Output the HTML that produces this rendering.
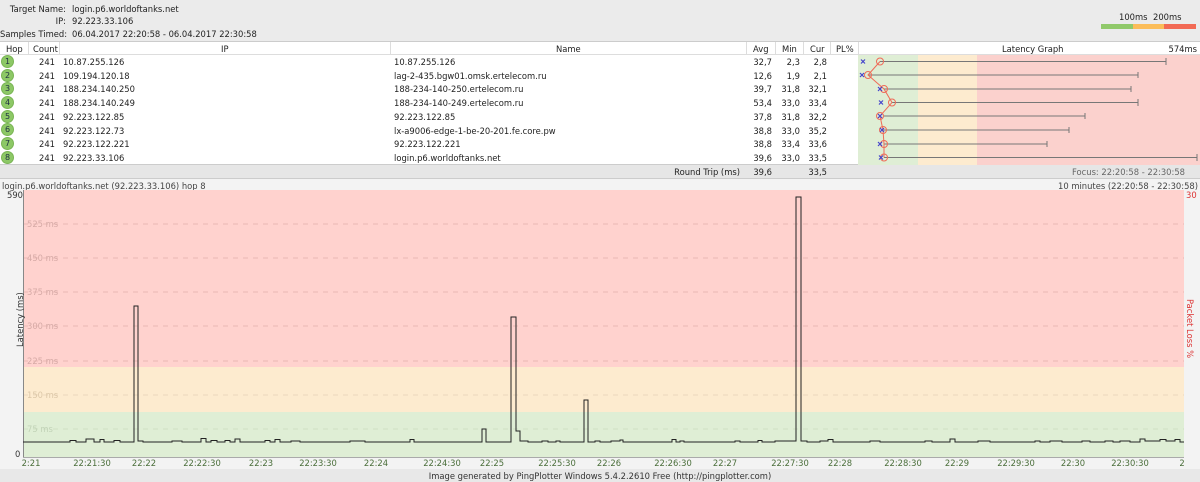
<!DOCTYPE html>
<html><head><meta charset="utf-8"><style>
*{margin:0;padding:0;box-sizing:border-box}
body{width:1200px;height:482px;overflow:hidden;background:#f3f3f3;font-family:"DejaVu Sans","Liberation Sans",sans-serif;font-size:8.4px;color:#222;position:relative}
.a{position:absolute;white-space:nowrap}
.r{text-align:right}
.hop{position:absolute;left:1px;width:13px;height:13px;border-radius:50%;background:#8dc866;border:1px solid #7ab555;font-size:8px;text-align:center;line-height:11px;color:#234}
</style></head><body>
<div class="a" style="left:0;top:0;width:1200px;height:41px;background:#ebebeb"></div>
<div class="a r" style="left:0;width:66px;top:4px">Target Name:</div>
<div class="a r" style="left:0;width:66px;top:16px">IP:</div>
<div class="a r" style="left:0;width:66px;top:29px">Samples Timed:</div>
<div class="a" style="left:72px;top:4px">login.p6.worldoftanks.net</div>
<div class="a" style="left:72px;top:16px">92.223.33.106</div>
<div class="a" style="left:72px;top:29px">06.04.2017 22:20:58 - 06.04.2017 22:30:58</div>
<div class="a" style="left:1119px;top:12px">100ms</div><div class="a" style="left:1153px;top:12px">200ms</div>
<div class="a" style="left:1101px;top:24px;width:32px;height:5px;background:#90c96a"></div>
<div class="a" style="left:1133px;top:24px;width:31px;height:5px;background:#fbbd5a"></div>
<div class="a" style="left:1164px;top:24px;width:32px;height:5px;background:#f26a55"></div>
<div class="a" style="left:0;top:41px;width:1200px;height:124px;background:#fff;border-top:1px solid #ccc;border-bottom:1px solid #ccc"></div>
<div class="a" style="left:0;top:42px;width:1200px;height:13px;border-bottom:1px solid #ddd"></div>
<svg class="a" style="left:0;top:42px" width="1200" height="14"><g stroke="#ddd"><line x1="28.5" y1="0" x2="28.5" y2="13"/><line x1="59.5" y1="0" x2="59.5" y2="13"/><line x1="390.5" y1="0" x2="390.5" y2="13"/><line x1="746.5" y1="0" x2="746.5" y2="13"/><line x1="775.5" y1="0" x2="775.5" y2="13"/><line x1="803.5" y1="0" x2="803.5" y2="13"/><line x1="830.5" y1="0" x2="830.5" y2="13"/><line x1="858.5" y1="0" x2="858.5" y2="13"/></g></svg>
<div class="a" style="left:6px;top:44px">Hop</div><div class="a" style="left:33px;top:44px">Count</div><div class="a" style="left:221px;top:44px">IP</div><div class="a" style="left:556px;top:44px">Name</div><div class="a" style="left:753px;top:44px">Avg</div><div class="a" style="left:782px;top:44px">Min</div><div class="a" style="left:810px;top:44px">Cur</div><div class="a" style="left:836px;top:44px">PL%</div><div class="a" style="left:1002px;top:44px">Latency Graph</div><div class="a r" style="right:3px;top:44px">574ms</div>
<svg class="a" style="left:858px;top:55px" width="342" height="110">
<rect x="0" y="0" width="60" height="110" fill="#dfeed5"/><rect x="60" y="0" width="59" height="110" fill="#fdebcf"/><rect x="119" y="0" width="223" height="110" fill="#fbd1cd"/>
<g stroke="#777" stroke-width="1"><line x1="22" y1="6.5" x2="308" y2="6.5"/><line x1="308" y1="3" x2="308" y2="10"/><line x1="10" y1="20" x2="280" y2="20"/><line x1="280" y1="17" x2="280" y2="23"/><line x1="26" y1="34" x2="273" y2="34"/><line x1="273" y1="31" x2="273" y2="37"/><line x1="34" y1="47.5" x2="280" y2="47.5"/><line x1="280" y1="44" x2="280" y2="51"/><line x1="26" y1="61" x2="227" y2="61"/><line x1="227" y1="58" x2="227" y2="64"/><line x1="25" y1="75" x2="211" y2="75"/><line x1="211" y1="72" x2="211" y2="78"/><line x1="26" y1="89" x2="189" y2="89"/><line x1="189" y1="86" x2="189" y2="92"/><line x1="26" y1="102.5" x2="339" y2="102.5"/><line x1="339" y1="99" x2="339" y2="106"/></g>
<polyline points="22,6.5 10,20 26,34 34,47.5 22,61 25,75 26,89 26,102.5" fill="none" stroke="#ef6b58" stroke-width="1"/>
<g fill="none" stroke="#ef6b58"><circle cx="22" cy="6.5" r="3.5"/><circle cx="10" cy="20" r="3.5"/><circle cx="26" cy="34" r="3.5"/><circle cx="34" cy="47.5" r="3.5"/><circle cx="22" cy="61" r="3.5"/><circle cx="25" cy="75" r="3.5"/><circle cx="26" cy="89" r="3.5"/><circle cx="26" cy="102.5" r="3.5"/></g>
<g stroke="#4444cc" stroke-width="1.2"><path d="M3,4.5l4,4m0,-4l-4,4"/><path d="M2,18l4,4m0,-4l-4,4"/><path d="M20,32l4,4m0,-4l-4,4"/><path d="M21,45.5l4,4m0,-4l-4,4"/><path d="M20,59l4,4m0,-4l-4,4"/><path d="M22,73l4,4m0,-4l-4,4"/><path d="M20,87l4,4m0,-4l-4,4"/><path d="M21,100.5l4,4m0,-4l-4,4"/></g>
</svg>
<div class="hop" style="top:55px">1</div><div class="hop" style="top:69px">2</div><div class="hop" style="top:82px">3</div><div class="hop" style="top:96px">4</div><div class="hop" style="top:110px">5</div><div class="hop" style="top:123px">6</div><div class="hop" style="top:137px">7</div><div class="hop" style="top:151px">8</div>
<div class="a" style="left:0;top:56px;line-height:13.7px">
<div style="position:absolute;left:32px;width:23px;text-align:right">241<br>241<br>241<br>241<br>241<br>241<br>241<br>241</div>
<div style="position:absolute;left:63px">10.87.255.126<br>109.194.120.18<br>188.234.140.250<br>188.234.140.249<br>92.223.122.85<br>92.223.122.73<br>92.223.122.221<br>92.223.33.106</div>
<div style="position:absolute;left:394px">10.87.255.126<br>lag-2-435.bgw01.omsk.ertelecom.ru<br>188-234-140-250.ertelecom.ru<br>188-234-140-249.ertelecom.ru<br>92.223.122.85<br>lx-a9006-edge-1-be-20-201.fe.core.pw<br>92.223.122.221<br>login.p6.worldoftanks.net</div>
<div style="position:absolute;left:748px;width:24px;text-align:right">32,7<br>12,6<br>39,7<br>53,4<br>37,8<br>38,8<br>38,8<br>39,6</div>
<div style="position:absolute;left:776px;width:24px;text-align:right">2,3<br>1,9<br>31,8<br>33,0<br>31,8<br>33,0<br>33,4<br>33,0</div>
<div style="position:absolute;left:803px;width:24px;text-align:right">2,8<br>2,1<br>32,1<br>33,4<br>32,2<br>35,2<br>33,6<br>33,5</div>
</div>
<div class="a" style="left:0;top:165px;width:1200px;height:14px;background:#e6e6e6;border-bottom:1px solid #ccc"></div>
<div class="a r" style="right:460px;top:167px">Round Trip (ms)</div><div class="a r" style="left:748px;width:24px;top:167px">39,6</div><div class="a r" style="left:803px;width:24px;top:167px">33,5</div>
<div class="a r" style="right:15px;top:167px;color:#666">Focus: 22:20:58 - 22:30:58</div>
<div class="a" style="left:2px;top:181px;color:#444">login.p6.worldoftanks.net (92.223.33.106) hop 8</div>
<div class="a r" style="right:2px;top:181px;color:#444">10 minutes (22:20:58 - 22:30:58)</div>
<svg class="a" style="left:0;top:180px" width="1200" height="302" font-family="DejaVu Sans" font-size="8.4">
<rect x="23" y="10" width="1161" height="177" fill="#ffd2ce"/><rect x="23" y="187" width="1161" height="45" fill="#fdebcf"/><rect x="23" y="232" width="1161" height="45" fill="#dfeed5"/>
<g stroke="#e8b8b4" stroke-dasharray="5,5"><line x1="23" y1="44" x2="1184" y2="44"/><line x1="23" y1="78" x2="1184" y2="78"/><line x1="23" y1="112" x2="1184" y2="112"/><line x1="23" y1="146" x2="1184" y2="146"/><line x1="23" y1="181" x2="1184" y2="181"/><line x1="23" y1="215" x2="1184" y2="215" stroke="#ead7bc"/><line x1="23" y1="249" x2="1184" y2="249" stroke="#cfe0c4"/></g>
<g fill="#d6aaa6"><text x="27" y="47">525 ms</text><text x="27" y="81">450 ms</text><text x="27" y="115">375 ms</text><text x="27" y="149">300 ms</text><text x="27" y="184">225 ms</text><text x="27" y="218" fill="#dcc7a8">150 ms</text><text x="27" y="252" fill="#c2d3b7">75 ms</text></g>
<line x1="23.5" y1="10" x2="23.5" y2="277" stroke="#888"/><line x1="23" y1="277.5" x2="1184" y2="277.5" stroke="#aaa"/>
<text x="7" y="18" fill="#333">590</text><text x="15" y="277" fill="#333">0</text>
<text x="1186" y="18" fill="#d33">30</text>
<text transform="translate(23,167) rotate(-90)" fill="#333">Latency (ms)</text>
<text transform="translate(1187,119) rotate(90)" fill="#d33">Packet Loss %</text>
<path d="M23,262 H70 V260.5 H76 V262 H86 V259 H94 V262 H100 V259.5 H104 V262 H114 V260.5 H120 V262 H134 V126 H138 V261 H143 V262 H172 V261 H182 V262 H201 V258.5 H206 V262 H211 V260.5 H217 V262 H225 V260.5 H230 V262 H235 V259 H240 V262 H265 V260.5 H270 V262 H275 V259.5 H280 V262 H291 V261 H300 V262 H350 V261 H365 V262 H410 V259.5 H414 V262 H482 V249 H486 V262 H511 V137 H516 V251 H520 V261 H528 V262 H542 V261 H548 V262 H556 V261 H560 V262 H584 V220 H588 V262 H595 V261 H600 V262 H611 V261 H620 V260 H623 V262 H672 V259.5 H676 V262 H680 V261 H684 V262 H735 V261 H740 V262 H758 V260.5 H762 V262 H775 V261 H796 V261 V17 H801 V261 H807 V262 H820 V261 H828 V259.5 H833 V262 H870 V261 H880 V262 H925 V261 H932 V262 H950 V259 H955 V262 H978 V261 H990 V262 H1035 V261 H1040 V262 H1050 V261 H1062 V262 H1082 V261 H1090 V262 H1105 V261 H1113 V262 H1120 V261 H1130 V262 H1140 V259 H1145 V261 H1160 V259.5 H1166 V261 H1175 V259.5 H1180 V262 H1184" fill="none" stroke="#222" stroke-width="1"/>
<g fill="#4a6e3a" text-anchor="middle"><text x="31" y="286">2:21</text><text x="92" y="286">22:21:30</text><text x="144" y="286">22:22</text><text x="202" y="286">22:22:30</text><text x="261" y="286">22:23</text><text x="318" y="286">22:23:30</text><text x="376" y="286">22:24</text><text x="442" y="286">22:24:30</text><text x="492" y="286">22:25</text><text x="557" y="286">22:25:30</text><text x="609" y="286">22:26</text><text x="673" y="286">22:26:30</text><text x="725" y="286">22:27</text><text x="790" y="286">22:27:30</text><text x="840" y="286">22:28</text><text x="903" y="286">22:28:30</text><text x="957" y="286">22:29</text><text x="1016" y="286">22:29:30</text><text x="1073" y="286">22:30</text><text x="1130" y="286">22:30:30</text><text x="1182" y="286">2</text></g>
<rect x="0" y="289" width="1200" height="13" fill="#e8e8e8"/>
<text x="600" y="299" text-anchor="middle" fill="#333">Image generated by PingPlotter Windows 5.4.2.2610 Free (http://pingplotter.com)</text>
</svg>
</body></html>
